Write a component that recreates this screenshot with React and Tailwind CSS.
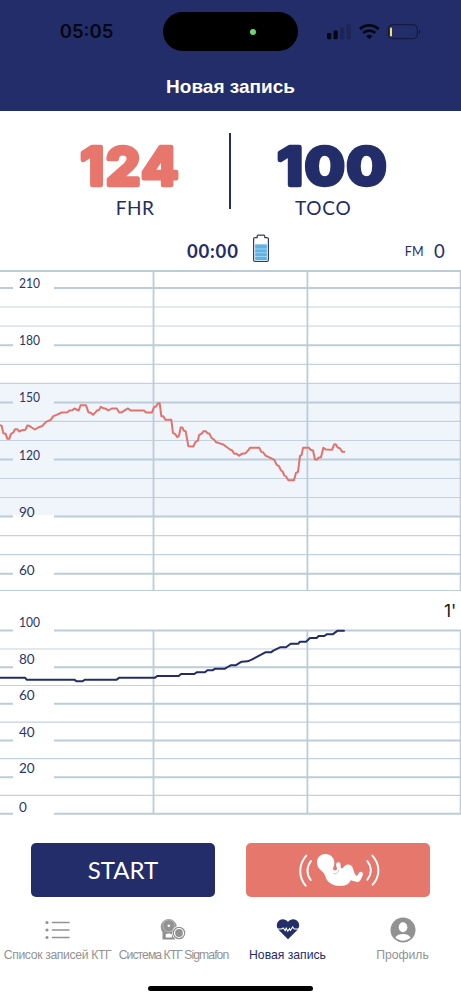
const FHR_LABELS = [
  { value: 210, line: 26, text: 26 },
  { value: 180, line: 83.2, text: 83.2 },
  { value: 150, line: 140.4, text: 140.4 },
  { value: 120, line: 197.6, text: 197.6 },
  { value: 90, line: 254.6, text: 254.6 },
  { value: 60, line: 311.8, text: 313.2 },
]

const FHR_MINOR = [45, 64, 102.3, 121.4, 159.4, 178.5, 216.5, 235.5, 273.6, 292.7]

const TOCO_LABELS = [
  { value: 100, line: 30.5, text: 27 },
  { value: 80, line: 67.2, text: 63.6 },
  { value: 60, line: 103.8, text: 100.4 },
  { value: 40, line: 140.5, text: 136.8 },
  { value: 20, line: 177.2, text: 173.4 },
  { value: 0, line: 213.8, text: 211.6 },
]

const TOCO_MINOR = [49, 85.5, 122.2, 158.7, 195.4]

// traces are in device pixels (3 per css pixel)
const FHR_TRACE =
  '0,488 5,490 10,512 17,514 22,529 28,529 33,514 40,510 45,500 52,500 58,507 66,503 76,502 82,489 88,490 95,495 105,501 115,495 127,490 138,478 152,472 160,461 170,457 185,450 203,449 208,444 217,443 223,438 236,444 242,428 258,428 265,449 272,451 279,457 287,449 292,443 297,443 302,433 310,437 318,439 325,444 335,438 350,438 358,450 366,449 375,443 384,438 392,444 432,444 438,450 456,450 462,434 468,432 474,422 479,422 484,461 490,461 496,472 514,472 519,512 525,514 532,524 537,520 542,495 547,495 552,505 557,506 562,534 565,551 580,552 586,539 594,534 597,518 607,512 610,506 617,506 622,512 628,513 635,527 642,531 648,539 655,541 670,546 690,561 697,564 702,573 710,574 717,580 725,574 737,572 745,563 750,556 778,556 784,568 790,570 796,579 805,583 823,592 830,607 837,611 843,624 848,627 853,639 858,642 865,653 882,653 888,631 894,628 900,580 905,577 909,556 927,556 932,562 939,564 945,591 952,591 955,586 963,584 970,556 978,561 996,562 1003,545 1008,546 1012,554 1020,558 1027,568 1033,568'

const TOCO_TRACE =
  '0,233 75,233 80,239 223,239 230,244 248,244 254,239 350,239 358,233 465,233 472,228 536,228 543,222 583,222 590,217 615,217 622,211 638,211 645,206 675,206 683,201 692,196 707,196 715,191 725,185 743,184 755,179 796,157 813,157 820,152 840,142 858,142 872,131 895,131 900,125 918,125 930,114 950,114 956,108 973,108 980,103 998,103 1013,92 1032,92'

function AxisLabel({ value, y }) {
  return (
    <text
      x="19"
      y={y}
      textLength={value >= 100 ? 21 : undefined}
      lengthAdjust="spacingAndGlyphs"
      className="fill-[#2b3467] font-['Lato',sans-serif] text-[13.5px]"
    >
      {value}
    </text>
  )
}

function MajorLine({ y }) {
  return <path d={`M0 ${y}H13M54 ${y}H461`} stroke="#bccdd9" strokeWidth="2" />
}

function FhrChart() {
  return (
    <svg viewBox="0 0 461 338" className="block h-[338px] w-full" fill="none">
      <rect y="121.4" width="461" height="133" fill="#eff5fb" />
      <rect x="13" y="253" width="41" height="4" fill="#fff" />
      {FHR_MINOR.map((y) => (
        <path key={y} d={`M0 ${y}H461`} stroke="#c3d2dd" strokeWidth="1.2" />
      ))}
      <path d="M0 9H461" stroke="#bccdd9" strokeWidth="1.8" />
      <path d="M0 328.5H461" stroke="#bccdd9" strokeWidth="1.2" />
      <path d="M153.5 9V328.5M307.4 9V328.5M460.6 9V328.5" stroke="#bccdd9" strokeWidth="1.8" />
      {FHR_LABELS.map((l) => (
        <g key={l.value}>
          <MajorLine y={l.line} />
          <AxisLabel value={l.value} y={l.text} />
        </g>
      ))}
      <polyline
        points={FHR_TRACE}
        transform="translate(0 .5) scale(.33333)"
        stroke="#e2726c"
        strokeWidth="6"
        strokeLinejoin="round"
        strokeLinecap="round"
      />
    </svg>
  )
}

function TocoChart() {
  return (
    <svg viewBox="0 0 461 230" className="block h-[230px] w-full" fill="none">
      {TOCO_MINOR.map((y) => (
        <path key={y} d={`M0 ${y}H461`} stroke="#c3d2dd" strokeWidth="1.2" />
      ))}
      <path d="M153.5 30V214M307.4 30V214M460.6 30V214" stroke="#bccdd9" strokeWidth="1.8" />
      {TOCO_LABELS.map((l) => (
        <g key={l.value}>
          <MajorLine y={l.line} />
          <AxisLabel value={l.value} y={l.text} />
        </g>
      ))}
      <text x="444" y="17" className="fill-[#1a1a1a] font-['Inter',sans-serif] text-[17.5px]">
        1'
      </text>
      <polyline
        points={TOCO_TRACE}
        transform="scale(.33333)"
        stroke="#212c68"
        strokeWidth="6"
        strokeLinejoin="round"
        strokeLinecap="round"
      />
    </svg>
  )
}

function StatusIcons() {
  return (
    <svg viewBox="0 0 96 18" className="h-[18px] w-[96px]" fill="none">
      <rect x="1" y="10" width="4.2" height="6.2" rx="1.2" fill="#050713" />
      <rect x="7.5" y="7.5" width="4.2" height="8.7" rx="1.2" fill="#050713" />
      <rect x="14" y="4.5" width="4.2" height="11.7" rx="1.2" fill="#1c2555" />
      <rect x="20.6" y="1.5" width="4.2" height="14.7" rx="1.2" fill="#1c2555" />
      <g stroke="#050713" strokeWidth="2.8">
        <path d="M34 6.2a13.4 13.4 0 0 1 18.6 0" />
        <path d="M37.3 10a8.6 8.6 0 0 1 12 0" />
      </g>
      <path d="M43.3 16.3l-3.1-3.2a4.5 4.5 0 0 1 6.2 0z" fill="#050713" />
      <rect x="62.3" y="1.7" width="29" height="14" rx="4.3" stroke="#151c42" strokeWidth="1.2" />
      <path d="M93 6.3c1.8.7 1.8 4.2 0 4.9z" fill="#151c42" />
      <rect x="64" y="4.4" width="2" height="9" rx=".8" fill="#f2e263" />
    </svg>
  )
}

function Header() {
  return (
    <header className="h-[111px] bg-[#222d69]">
      <div className="flex h-[63px] items-center">
        <div className="w-[163px] pl-[10px] text-center font-['Inter',sans-serif] text-[18.5px] font-semibold text-[#050713]">
          05:05
        </div>
        <div className="flex h-[39px] w-[135px] items-center rounded-full bg-black pl-[87px]">
          <span className="size-[6px] rounded-full bg-[#70d474]" />
        </div>
        <div className="pl-[28px]">
          <StatusIcons />
        </div>
      </div>
      <h1 className="pt-[10px] text-center font-['Liberation_Sans',sans-serif] text-[19px] leading-7 font-bold text-white">
        Новая запись
      </h1>
    </header>
  )
}

// the stroke rounds off the corners of the digits, stretch widens them
function BigNumber({ value, width, stretch, color }) {
  return (
    <svg viewBox={`0 0 ${width + 20} 66`} width={width + 20} height="66">
      <text
        x="0"
        y="52"
        transform={`translate(10.5 0) scale(${stretch} 1)`}
        textLength={width / stretch}
        fill={color}
        stroke={color}
        strokeWidth="4.5"
        strokeLinejoin="round"
        className="font-['Inter',sans-serif] text-[52.5px] font-bold"
      >
        {value}
      </text>
    </svg>
  )
}

function Stats() {
  return (
    <section className="flex h-[120px] pt-[22px] text-[#222d69]">
      <div className="flex w-[229px] flex-col items-center pl-[29px]">
        <BigNumber value={124} width={98} stretch={1.05} color="#e8766d" />
        <div className="-mt-[2px] pl-[12px] font-['Lato',sans-serif] text-[19px] leading-[22px] tracking-[.5px]">FHR</div>
      </div>
      <div className="h-[76px] w-[1.5px] bg-[#222d69]" />
      <div className="flex flex-1 flex-col items-center pr-[30px]">
        <div className="pl-[1px]">
          <BigNumber value={100} width={109} stretch={1.13} color="#222d69" />
        </div>
        <div className="-mt-[2px] pr-[15px] font-['Lato',sans-serif] text-[19px] leading-[22px] tracking-[.8px]">TOCO</div>
      </div>
    </section>
  )
}

function RecordInfo() {
  return (
    <div className="flex h-[31px] items-start pl-[187px] font-['Lato',sans-serif] text-[#222d69]">
      <span className="w-[65px] pt-[8px] text-[18.5px] leading-6 font-bold tracking-[.8px]">00:00</span>
      <svg viewBox="0 0 18 30" className="mt-[2px] h-[30px] w-[18px]" fill="none">
        <path
          d="M3 4.7h2.2V3.2q0-1 1-1h5.6q1 0 1 1v1.5H15q1.4 0 1.4 1.4v21q0 1.4-1.4 1.4H3q-1.4 0-1.4-1.4v-21q0-1.4 1.4-1.4z"
          stroke="#303a70"
          strokeWidth="1.2"
        />
        <path d="M3.2 11.5h11.6v15.7H3.2z" fill="#9fd2f0" />
        <path d="M3.2 11.5h11.6v4H3.2zM3.2 16.5h11.6v2.7H3.2zM3.2 20.2h11.6v2.7H3.2zM3.2 23.9h11.6v3.3H3.2z" fill="#5db3e4" />
      </svg>
      <span className="ml-auto pt-[9px] text-[12.5px] leading-6 tracking-[.3px]">FM</span>
      <span className="ml-[10px] w-[27px] pt-[8px] text-[18.5px] leading-6">0</span>
    </div>
  )
}

function BabyIcon() {
  return (
    <svg viewBox="0 0 285 150" className="h-[50px] w-[95px]" fill="none">
      <g stroke="#fff" strokeWidth="6" strokeLinecap="round">
        <path d="M46 32c-24 26-24 64-2 90M60 48c-14 18-14 40-1 57" />
        <path d="M244 32c24 26 24 62 1 87M229 48c14 18 14 38 0 56" />
      </g>
      <path
        d="M103 27C117 27 129 37 130 51C131 59 129 64 126 69C125 73 129 77 134 76C138 74 139 72 137 67C134 59 135 52 142 52C149 52 149 59 149 66C150 70 153 72 156 69C161 60 171 56 180 61C187 67 187 78 192 88C195 94 199 94 202 87C205 79 211 78 215 83C218 88 213 95 210 102C207 110 201 113 195 110L179 106C174 119 162 123 147 123C122 123 107 110 103 94C101 87 97 82 91 77C82 71 77 61 78 49C80 36 90 27 103 27Z"
        fill="#fff"
      />
      <path d="M127 84q5 4 9 2q5-4 7-11" stroke="#e6776d" strokeWidth="1.5" />
    </svg>
  )
}

function Actions() {
  return (
    <div className="flex justify-center gap-[31px] pt-[13px]">
      <button className="h-[54px] w-[184px] rounded-[5px] bg-[#222d69] font-['Lato',sans-serif] text-[24px] text-white">
        START
      </button>
      <button className="flex h-[54px] w-[184px] items-center justify-center rounded-[5px] bg-[#e6776d]">
        <BabyIcon />
      </button>
    </div>
  )
}

function ListIcon() {
  return (
    <svg viewBox="0 0 26 26" className="size-[26px]" stroke="#929292" strokeLinecap="round">
      <path d="M7.5 5.5H24M7.5 13H24M7.5 20.5H24" strokeWidth="1.6" />
      <path d="M2 5.5h.01M2 13h.01M2 20.5h.01" strokeWidth="3.2" />
    </svg>
  )
}

function DeviceIcon() {
  return (
    <svg viewBox="0 0 26 26" className="size-[26px]" fill="none">
      <path d="M2.5 22.5V15A8 8 0 1 1 15 15v7.5z" fill="#929292" />
      <circle cx="8.8" cy="8.8" r="6" stroke="#c9c9c9" strokeWidth=".7" />
      <circle cx="8.8" cy="8.8" r="1.3" fill="#fff" />
      <path d="M5.2 16.8q3.6-1.7 7.2 0v4.2H5.2z" fill="#fff" stroke="#777" strokeWidth=".7" />
      <circle cx="19" cy="16" r="6.9" fill="#fff" />
      <circle cx="19" cy="16" r="5.7" stroke="#929292" strokeWidth="1.2" />
      <circle cx="19" cy="16" r="3.9" fill="#929292" />
    </svg>
  )
}

function HeartIcon() {
  return (
    <svg viewBox="0 0 26 26" className="size-[26px]" fill="none">
      <path d="M13 22.3 4.2 13.6C.6 9.8 1.4 5.500 4.500 3.300 7.500 1.300 11 2.500 13 5c2-2.500 5.500-3.700 8.500-1.700 3.100 2.200 3.900 6.500.3 10.300z" fill="#222d69" />
      <path d="M1 12h5.500l1.700-1 2 2.600 1-2.600 1.600 3.200 1.700-2.600.9 1.800 2.300-3.500 1.500 2.100H25" stroke="#fff" strokeWidth="1.1" />
    </svg>
  )
}

function ProfileIcon() {
  return (
    <svg viewBox="0 0 26 26" className="size-[26px]" fill="none">
      <circle cx="13" cy="13" r="12.5" fill="#929292" />
      <ellipse cx="13" cy="10.2" rx="4.3" ry="5" fill="#fff" />
      <path d="M5.3 20.5c1.5-2.5 4.3-3.5 7.7-3.5s6.2 1 7.7 3.5c-4.5 4.2-10.9 4.2-15.4 0z" fill="#fff" />
    </svg>
  )
}

const tabs = [
  { label: 'Список записей КТГ', icon: ListIcon, style: 'text-[#929292] tracking-[-.35px]' },
  { label: 'Система КТГ Sigmafon', icon: DeviceIcon, style: 'pl-[2px] text-[#929292] tracking-[-.95px]' },
  { label: 'Новая запись', icon: HeartIcon, style: 'text-[#222d69]' },
  { label: 'Профиль', icon: ProfileIcon, style: 'text-[#929292]' },
]

function TabBar() {
  return (
    <nav className="grid grid-cols-[115px_115px_115px_115px] pt-[20px]">
      {tabs.map(({ label, icon: Icon, style }) => (
        <button key={label} className="flex flex-col items-center">
          <Icon />
          <span className={`pt-[4px] font-['Liberation_Sans',sans-serif] text-[12.2px] leading-4 whitespace-nowrap ${style}`}>
            {label}
          </span>
        </button>
      ))}
    </nav>
  )
}

export default function App() {
  return (
    <div className="flex h-[1000px] w-[461px] flex-col overflow-hidden bg-white">
      <Header />
      <Stats />
      <RecordInfo />
      <FhrChart />
      <TocoChart />
      <Actions />
      <TabBar />
      <div className="mx-auto mt-auto mb-[9px] h-[5px] w-[165px] rounded-full bg-black" />
    </div>
  )
}
